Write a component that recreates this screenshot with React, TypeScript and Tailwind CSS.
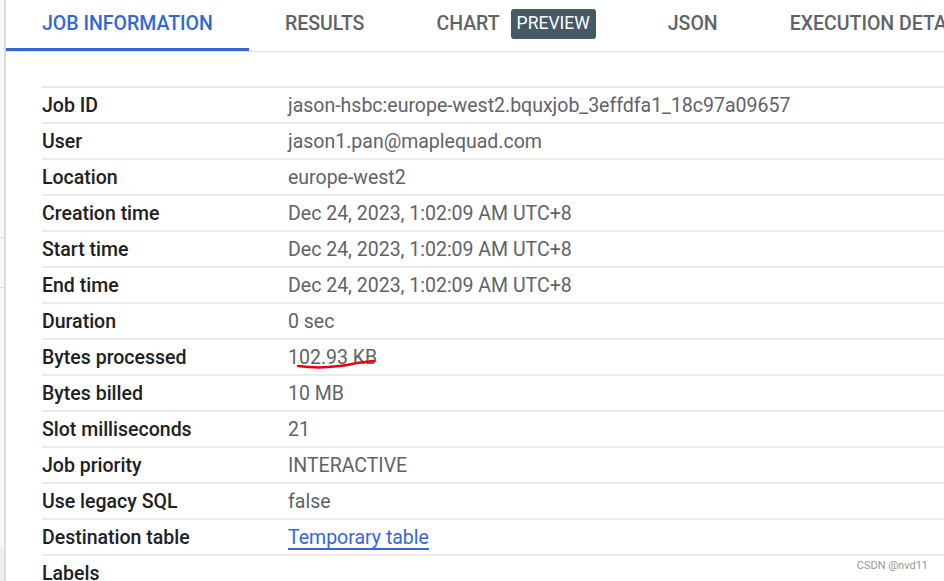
import React from "react";

const rows: { label: string; value: string; link?: boolean; mark?: boolean }[] = [
    { label: "Job ID", value: "jason-hsbc:europe-west2.bquxjob_3effdfa1_18c97a09657" },
    { label: "User", value: "jason1.pan@maplequad.com" },
    { label: "Location", value: "europe-west2" },
    { label: "Creation time", value: "Dec 24, 2023, 1:02:09 AM UTC+8" },
    { label: "Start time", value: "Dec 24, 2023, 1:02:09 AM UTC+8" },
    { label: "End time", value: "Dec 24, 2023, 1:02:09 AM UTC+8" },
    { label: "Duration", value: "0 sec" },
    { label: "Bytes processed", value: "102.93 KB", mark: true },
    { label: "Bytes billed", value: "10 MB" },
    { label: "Slot milliseconds", value: "21" },
    { label: "Job priority", value: "INTERACTIVE" },
    { label: "Use legacy SQL", value: "false" },
    { label: "Destination table", value: "Temporary table", link: true },
    { label: "Labels", value: "" },
];

const Tab: React.FC<{ name: string; active?: boolean; badge?: string }> = ({
    name,
    active,
    badge,
}) => {
    return (
        <div
            className={`h-full px-[36px] pb-[1px] flex items-center gap-[11px] shrink-0 border-b-[3px] ${
                active ? "border-[#3367d6] text-[#3367d6]" : "border-transparent text-[#5f6368]"
            }`}
        >
            <span className="text-[19.5px] font-medium">{name}</span>
            {badge && (
                <span className="bg-[#455a64] text-white text-[17.5px] rounded-[3px] h-[30px] px-[6px] flex items-center">
                    {badge}
                </span>
            )}
        </div>
    );
};

const App: React.FC = () => {
    return (
        <div
            className="w-[944px] h-[581px] overflow-hidden flex bg-white relative"
            style={{ fontFamily: "Roboto, 'Liberation Sans', sans-serif" }}
        >
            {/* left strip */}
            <div className="w-[4px] bg-[#f8f8f8] flex flex-col shrink-0">
                <div className="h-[238px] border-b border-[#dddddd]" />
                <div className="h-[50px] border-b border-[#dddddd]" />
                <div className="flex-1" />
                <div className="h-[34px] bg-[#eeeeee] rounded-tr-[4px]" />
            </div>
            <div className="w-[2px] bg-[#dadce0] shrink-0" />

            <div className="flex-1 min-w-0">
                <div className="h-[52px] flex border-b border-[#e0e0e0] whitespace-nowrap">
                    <Tab name="JOB INFORMATION" active />
                    <Tab name="RESULTS" />
                    <Tab name="CHART" badge="PREVIEW" />
                    <Tab name="JSON" />
                    <Tab name="EXECUTION DETAILS" />
                </div>

                <div className="pt-[34px] pl-[36px]">
                    <div className="border-t-2 border-[#e8e8e8]">
                        {rows.map((row) => (
                            <div
                                key={row.label}
                                className="h-[36px] pt-[1px] flex items-center border-b-2 border-[#ececec] text-[19.5px] whitespace-nowrap"
                            >
                                <div className="w-[246px] shrink-0 font-medium text-[#202124]">
                                    {row.label}
                                </div>
                                <div className="relative text-[#5f6368]">
                                    {row.link ? (
                                        <span className="text-[#3367d6] underline underline-offset-[4px] decoration-[1.5px]">
                                            {row.value}
                                        </span>
                                    ) : (
                                        row.value
                                    )}
                                    {row.mark && (
                                        <svg
                                            className="absolute left-[8px] top-[15px]"
                                            width="80"
                                            height="12"
                                            viewBox="0 0 80 12"
                                        >
                                            <path
                                                d="M2 8 C 10 9, 20 10, 32 9 S 48 8, 56 6 S 70 4, 78 3"
                                                fill="none"
                                                stroke="#e8000b"
                                                strokeWidth="2.5"
                                                strokeLinecap="round"
                                            />
                                        </svg>
                                    )}
                                </div>
                            </div>
                        ))}
                    </div>
                </div>
            </div>

            <div className="absolute right-[16px] bottom-[7px] text-[11px] text-[#999999]">
                CSDN @nvd11
            </div>
        </div>
    );
};

export default App;
